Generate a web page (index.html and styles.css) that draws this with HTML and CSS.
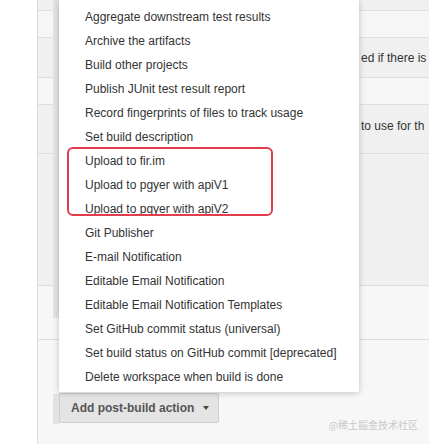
FILE: index.html
```html
<!DOCTYPE html>
<html>
<head>
<meta charset="utf-8">
<link rel="stylesheet" href="styles.css">
</head>
<body>
<div class="page">
  <div class="gutter"></div>
  <div class="main">
    <div class="row r1"></div>
    <div class="row r2"></div>
    <div class="row r3"><span class="desc">ed if there is</span></div>
    <div class="row r4"></div>
    <div class="row r5"><span class="desc">to use for th</span></div>
    <div class="row r6"></div>
    <div class="row r7"></div>
    <div class="row r8">
      <div class="caret"></div>
      <div class="btn-wrap">
        <button class="btn">Add post-build action <span class="tri"></span></button>
      </div>
    </div>
    <div class="mark">@稀土掘金技术社区</div>
  </div>
  <ul class="menu">
    <li>Aggregate downstream test results</li>
    <li>Archive the artifacts</li>
    <li>Build other projects</li>
    <li>Publish JUnit test result report</li>
    <li>Record fingerprints of files to track usage</li>
    <li>Set build description</li>
    <li>Upload to fir.im</li>
    <li>Upload to pgyer with apiV1</li>
    <li>Upload to pgyer with apiV2</li>
    <li>Git Publisher</li>
    <li>E-mail Notification</li>
    <li>Editable Email Notification</li>
    <li>Editable Email Notification Templates</li>
    <li>Set GitHub commit status (universal)</li>
    <li>Set build status on GitHub commit [deprecated]</li>
    <li>Delete workspace when build is done</li>
    <li class="highlight" aria-hidden="true"></li>
  </ul>
</div>
</body>
</html>
```

FILE: styles.css
```css
* { box-sizing: border-box; }
html, body { margin: 0; padding: 0; }
body {
  background: #fff;
  font-family: "Liberation Sans", Arial, Helvetica, sans-serif;
  color: #333;
  overflow: hidden;
}
.page {
  position: relative;
  display: flex;
  width: 429px;
  height: 444px;
}
.gutter { width: 37px; flex: none; background: #fff; }
.main {
  position: relative;
  flex: 1;
  display: flex;
  flex-direction: column;
  border-left: 1px solid #dcdcdc;
  background: #f7f7f7;
}
.main::before {
  content: "";
  position: absolute;
  left: 15px;
  top: 0;
  width: 6px;
  height: 318px;
  background: #e4e4e4;
}
.row {
  flex: none;
  display: flex;
  align-items: center;
  border-bottom: 1px solid #dedede;
  background: #f0f0f0;
  white-space: nowrap;
  overflow: hidden;
}
.r1 { height: 11px; }
.r2 { height: 27px; background: #f6f6f6; }
.r3 { height: 40px; }
.r4 { height: 27px; background: #f6f6f6; }
.r5 { height: 49px; align-items: flex-start; padding-top: 14px; }
.r6 { height: 132px; }
.r7 { height: 54px; background: #f7f7f7; }
.r8 {
  flex: 1;
  border-bottom: none;
  background: #f7f7f7;
  flex-direction: column;
  align-items: stretch;
  position: relative;
}
.desc {
  padding-left: 323px;
  font-size: 12px;
  color: #333;
}
.caret {
  position: absolute;
  left: 21px;
  top: 12px;
  width: 1px;
  height: 15px;
  background: #8a8a8a;
}
.btn-wrap {
  margin-top: 53px;
  display: flex;
  padding-left: 15px;
}
.btn-wrap::before {
  content: "";
  width: 6px;
  height: 30px;
  background: #e2e2e2;
  margin-top: 1px;
}
.btn {
  width: 160px;
  height: 30px;
  margin: 0;
  padding: 0 0 0 11px;
  border: 1px solid #cfcfcf;
  border-radius: 0 2px 2px 0;
  background: #e4e4e4;
  color: #555;
  font-family: "Liberation Sans", Arial, Helvetica, sans-serif;
  font-size: 12px;
  font-weight: bold;
  text-align: left;
  display: flex;
  align-items: center;
  gap: 9px;
}
.tri {
  width: 0;
  height: 0;
  border-left: 3.5px solid transparent;
  border-right: 3.5px solid transparent;
  border-top: 4px solid #444;
}
.mark {
  position: absolute;
  right: 11px;
  bottom: 12px;
  font-family: "Noto Sans CJK SC", sans-serif;
  font-size: 10px;
  line-height: 14px;
  color: #c9c9c9;
}
.menu {
  position: absolute;
  left: 59px;
  top: 0;
  width: 300px;
  height: 392px;
  margin: 0;
  padding: 5px 0 3px 0;
  list-style: none;
  background: #fff;
  box-shadow: 0 1px 6px rgba(0, 0, 0, 0.22);
}
.menu li {
  height: 24px;
  line-height: 24px;
  padding-left: 26px;
  font-size: 12px;
  color: #333;
  white-space: nowrap;
}
.menu li.highlight {
  position: absolute;
  left: 8px;
  top: 147px;
  width: 206px;
  height: 69px;
  padding: 0;
  border: 2.5px solid #e23d4d;
  border-radius: 6px;
}
```
